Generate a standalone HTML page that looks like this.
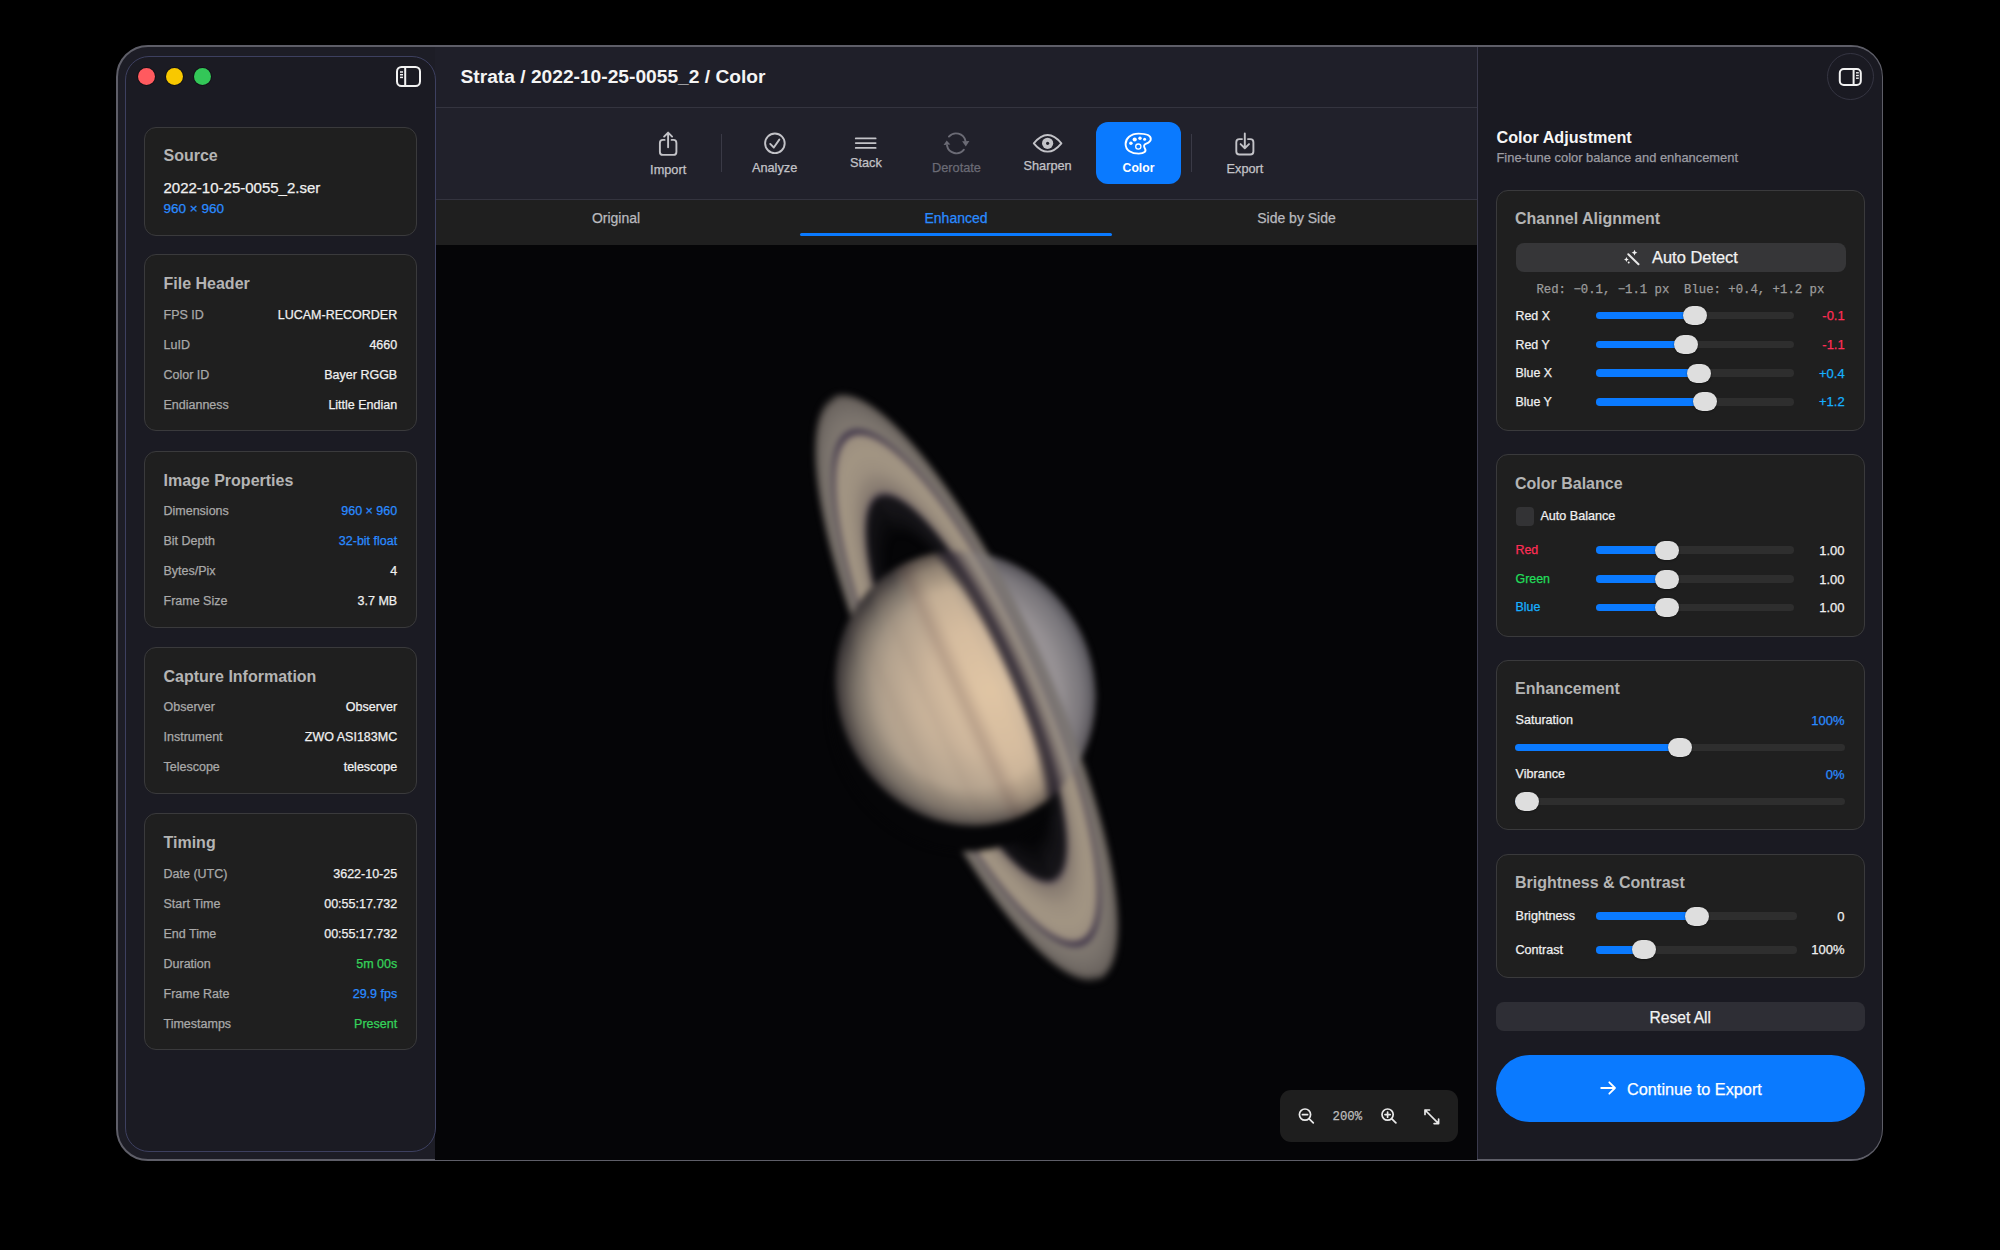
<!DOCTYPE html><html><head><meta charset="utf-8"><style>
*{box-sizing:border-box;margin:0;padding:0}
html,body{width:2000px;height:1250px;background:#000;overflow:hidden;font-family:"Liberation Sans",sans-serif;color:#eee}
.abs{position:absolute}
.t{position:absolute;white-space:nowrap;line-height:1;-webkit-text-stroke:0.25px currentColor}
</style></head><body><div class="abs" style="left:116px;top:45px;width:1767px;height:1116px;border-radius:32px;background:#1d1d26;border:2px solid #5e5e68;"></div>
<div class="abs" style="left:435px;top:46.5px;width:1042px;height:60.5px;background:#1f1f29;"></div>
<div class="abs" style="left:435px;top:107px;width:1042px;height:92px;background:#21212b;border-top:1px solid #34343f;"></div>
<div class="abs" style="left:435px;top:199px;width:1042px;height:46px;background:#1f1f1f;border-top:1px solid #34343f;"></div>
<div class="abs" style="left:435px;top:245px;width:1042px;height:914.5px;background:#050507;"></div>
<div class="abs" style="left:1477px;top:47px;width:404.5px;height:1112px;background:#1a1a22;border-left:1px solid #3a3a4c;border-radius:0 30px 30px 0;"></div>
<div class="abs" style="left:125px;top:55.5px;width:310.5px;height:1096px;border-radius:24px;background:#1b1b23;border:1px solid #3d4060;"></div>
<div class="abs" style="left:138.0px;top:68.0px;width:17px;height:17px;border-radius:50%;background:#ff5a5f;box-shadow:0 0 0 1px rgba(0,0,0,.35);"></div>
<div class="abs" style="left:165.7px;top:68.0px;width:17px;height:17px;border-radius:50%;background:#f8c800;box-shadow:0 0 0 1px rgba(0,0,0,.35);"></div>
<div class="abs" style="left:193.5px;top:68.0px;width:17px;height:17px;border-radius:50%;background:#33c758;box-shadow:0 0 0 1px rgba(0,0,0,.35);"></div>
<svg class="abs" style="left:395px;top:65px" width="28" height="24" viewBox="0 0 28 24"><rect x="2" y="2" width="23" height="19" rx="4.5" fill="none" stroke="#f2f2f2" stroke-width="2"/><line x1="10.2" y1="2" x2="10.2" y2="21" stroke="#f2f2f2" stroke-width="2"/><g stroke="#f2f2f2" stroke-width="1.5"><line x1="5" y1="7" x2="8" y2="7"/><line x1="5" y1="9.7" x2="8" y2="9.7"/><line x1="5" y1="12.4" x2="8" y2="12.4"/></g></svg>
<div class="abs" style="left:144.4px;top:126.6px;width:272.8px;height:109px;background:#1f1f1f;border:1px solid #3a3a3c;border-radius:12px;"></div>
<div class="t" style="top:148.26px;font-size:16px;color:#b4b4b4;font-weight:bold;-webkit-text-stroke:0;left:163.50px;">Source</div>
<div class="t" style="top:180.30px;font-size:15px;color:#f0f0f0;left:163.50px;">2022-10-25-0055_2.ser</div>
<div class="t" style="top:201.57px;font-size:13.5px;color:#2a8bff;left:163.50px;">960 × 960</div>
<div class="abs" style="left:144.4px;top:254.4px;width:272.8px;height:177.1px;background:#1f1f1f;border:1px solid #3a3a3c;border-radius:12px;"></div>
<div class="t" style="top:276.06px;font-size:16px;color:#b4b4b4;font-weight:bold;-webkit-text-stroke:0;left:163.50px;">File Header</div>
<div class="t" style="top:308.62px;font-size:12.5px;color:#a9a9a9;left:163.50px;">FPS ID</div>
<div class="t" style="top:308.62px;font-size:12.5px;color:#f0f0f0;right:1602.80px;">LUCAM-RECORDER</div>
<div class="t" style="top:338.62px;font-size:12.5px;color:#a9a9a9;left:163.50px;">LuID</div>
<div class="t" style="top:338.62px;font-size:12.5px;color:#f0f0f0;right:1602.80px;">4660</div>
<div class="t" style="top:368.62px;font-size:12.5px;color:#a9a9a9;left:163.50px;">Color ID</div>
<div class="t" style="top:368.62px;font-size:12.5px;color:#f0f0f0;right:1602.80px;">Bayer RGGB</div>
<div class="t" style="top:398.62px;font-size:12.5px;color:#a9a9a9;left:163.50px;">Endianness</div>
<div class="t" style="top:398.62px;font-size:12.5px;color:#f0f0f0;right:1602.80px;">Little Endian</div>
<div class="abs" style="left:144.4px;top:450.9px;width:272.8px;height:177.10000000000002px;background:#1f1f1f;border:1px solid #3a3a3c;border-radius:12px;"></div>
<div class="t" style="top:472.86px;font-size:16px;color:#b4b4b4;font-weight:bold;-webkit-text-stroke:0;left:163.50px;">Image Properties</div>
<div class="t" style="top:505.42px;font-size:12.5px;color:#a9a9a9;left:163.50px;">Dimensions</div>
<div class="t" style="top:505.42px;font-size:12.5px;color:#2a8bff;right:1602.80px;">960 × 960</div>
<div class="t" style="top:535.42px;font-size:12.5px;color:#a9a9a9;left:163.50px;">Bit Depth</div>
<div class="t" style="top:535.42px;font-size:12.5px;color:#2a8bff;right:1602.80px;">32-bit float</div>
<div class="t" style="top:565.42px;font-size:12.5px;color:#a9a9a9;left:163.50px;">Bytes/Pix</div>
<div class="t" style="top:565.42px;font-size:12.5px;color:#f0f0f0;right:1602.80px;">4</div>
<div class="t" style="top:595.42px;font-size:12.5px;color:#a9a9a9;left:163.50px;">Frame Size</div>
<div class="t" style="top:595.42px;font-size:12.5px;color:#f0f0f0;right:1602.80px;">3.7 MB</div>
<div class="abs" style="left:144.4px;top:647.2px;width:272.8px;height:147.19999999999993px;background:#1f1f1f;border:1px solid #3a3a3c;border-radius:12px;"></div>
<div class="t" style="top:668.86px;font-size:16px;color:#b4b4b4;font-weight:bold;-webkit-text-stroke:0;left:163.50px;">Capture Information</div>
<div class="t" style="top:701.42px;font-size:12.5px;color:#a9a9a9;left:163.50px;">Observer</div>
<div class="t" style="top:701.42px;font-size:12.5px;color:#f0f0f0;right:1602.80px;">Observer</div>
<div class="t" style="top:731.42px;font-size:12.5px;color:#a9a9a9;left:163.50px;">Instrument</div>
<div class="t" style="top:731.42px;font-size:12.5px;color:#f0f0f0;right:1602.80px;">ZWO ASI183MC</div>
<div class="t" style="top:761.42px;font-size:12.5px;color:#a9a9a9;left:163.50px;">Telescope</div>
<div class="t" style="top:761.42px;font-size:12.5px;color:#f0f0f0;right:1602.80px;">telescope</div>
<div class="abs" style="left:144.4px;top:813.3px;width:272.8px;height:236.70000000000005px;background:#1f1f1f;border:1px solid #3a3a3c;border-radius:12px;"></div>
<div class="t" style="top:835.26px;font-size:16px;color:#b4b4b4;font-weight:bold;-webkit-text-stroke:0;left:163.50px;">Timing</div>
<div class="t" style="top:867.82px;font-size:12.5px;color:#a9a9a9;left:163.50px;">Date (UTC)</div>
<div class="t" style="top:867.82px;font-size:12.5px;color:#f0f0f0;right:1602.80px;">3622-10-25</div>
<div class="t" style="top:897.82px;font-size:12.5px;color:#a9a9a9;left:163.50px;">Start Time</div>
<div class="t" style="top:897.82px;font-size:12.5px;color:#f0f0f0;right:1602.80px;">00:55:17.732</div>
<div class="t" style="top:927.82px;font-size:12.5px;color:#a9a9a9;left:163.50px;">End Time</div>
<div class="t" style="top:927.82px;font-size:12.5px;color:#f0f0f0;right:1602.80px;">00:55:17.732</div>
<div class="t" style="top:957.82px;font-size:12.5px;color:#a9a9a9;left:163.50px;">Duration</div>
<div class="t" style="top:957.82px;font-size:12.5px;color:#35d35a;right:1602.80px;">5m 00s</div>
<div class="t" style="top:987.82px;font-size:12.5px;color:#a9a9a9;left:163.50px;">Frame Rate</div>
<div class="t" style="top:987.82px;font-size:12.5px;color:#2a8bff;right:1602.80px;">29.9 fps</div>
<div class="t" style="top:1017.82px;font-size:12.5px;color:#a9a9a9;left:163.50px;">Timestamps</div>
<div class="t" style="top:1017.82px;font-size:12.5px;color:#35d35a;right:1602.80px;">Present</div>
<div class="t" style="top:66.65px;font-size:19.2px;color:#f4f4f4;font-weight:bold;-webkit-text-stroke:0;left:460.50px;">Strata / 2022-10-25-0055_2 / Color</div>

<svg class="abs" style="left:435px;top:245px" width="1042" height="914" viewBox="435 245 1042 914">
<defs>
<filter id="bl" x="-20%" y="-20%" width="140%" height="140%" color-interpolation-filters="sRGB"><feGaussianBlur stdDeviation="3"/></filter>
<radialGradient id="rg" gradientUnits="userSpaceOnUse" cx="0" cy="0" r="322">
 <stop offset="0" stop-color="#000" stop-opacity="0"/>
 <stop offset="0.52" stop-color="#17161a" stop-opacity="0"/>
 <stop offset="0.60" stop-color="#17161a" stop-opacity="0.6"/>
 <stop offset="0.650" stop-color="#1a181c" stop-opacity="0.75"/>
 <stop offset="0.655" stop-color="#4e4450" stop-opacity="1"/>
 <stop offset="0.672" stop-color="#85796f"/>
 <stop offset="0.74" stop-color="#9c8f7f"/>
 <stop offset="0.80" stop-color="#a29583"/>
 <stop offset="0.855" stop-color="#9a8d7e"/>
 <stop offset="0.862" stop-color="#40364a"/>
 <stop offset="0.874" stop-color="#40364a"/>
 <stop offset="0.882" stop-color="#807870"/>
 <stop offset="0.93" stop-color="#77706a"/>
 <stop offset="0.975" stop-color="#6a635e"/>
 <stop offset="1" stop-color="#6a635e" stop-opacity="0"/>
</radialGradient>
<radialGradient id="sh" gradientUnits="userSpaceOnUse" cx="0" cy="0" r="260">
 <stop offset="0" stop-color="#000" stop-opacity="0"/>
 <stop offset="0.64" stop-color="#2a2230" stop-opacity="0"/>
 <stop offset="0.70" stop-color="#2a2230" stop-opacity="0.5"/>
 <stop offset="0.80" stop-color="#2e2634" stop-opacity="0.62"/>
 <stop offset="0.87" stop-color="#3a3240" stop-opacity="0.45"/>
 <stop offset="0.95" stop-color="#3a3240" stop-opacity="0.12"/>
 <stop offset="1" stop-color="#3a3240" stop-opacity="0"/>
</radialGradient>
<radialGradient id="gy" gradientUnits="userSpaceOnUse" cx="0" cy="0" r="324">
 <stop offset="0" stop-color="#888" stop-opacity="0"/>
 <stop offset="0.70" stop-color="#878486" stop-opacity="0"/>
 <stop offset="0.76" stop-color="#878486" stop-opacity="0.35"/>
 <stop offset="1" stop-color="#878486" stop-opacity="0.35"/>
</radialGradient>
<radialGradient id="pg" gradientUnits="userSpaceOnUse" cx="12" cy="-22" r="152">
 <stop offset="0" stop-color="#dcc3a4"/>
 <stop offset="0.42" stop-color="#cdb69c"/>
 <stop offset="0.70" stop-color="#b3a28e"/>
 <stop offset="0.88" stop-color="#8e8478"/>
 <stop offset="1" stop-color="#5a5450"/>
</radialGradient>
<linearGradient id="bands" gradientUnits="userSpaceOnUse" x1="0" y1="-130" x2="0" y2="130">
 <stop offset="0" stop-color="#8a8a92" stop-opacity="0.9"/>
 <stop offset="0.30" stop-color="#8e8a92" stop-opacity="0.8"/>
 <stop offset="0.36" stop-color="#d8bc9c" stop-opacity="0"/>
 <stop offset="0.40" stop-color="#e6c8a4" stop-opacity="0.35"/>
 <stop offset="0.47" stop-color="#e6c8a4" stop-opacity="0.35"/>
 <stop offset="0.53" stop-color="#9a8070" stop-opacity="0.45"/>
 <stop offset="0.58" stop-color="#b8a08a" stop-opacity="0.0"/>
 <stop offset="0.66" stop-color="#9c8a7a" stop-opacity="0.2"/>
 <stop offset="0.70" stop-color="#c0ae98" stop-opacity="0.0"/>
 <stop offset="0.78" stop-color="#9c8a7a" stop-opacity="0.2"/>
 <stop offset="0.84" stop-color="#c0ae98" stop-opacity="0.0"/>
 <stop offset="1" stop-color="#8a7c70" stop-opacity="0.25"/>
</linearGradient>
<radialGradient id="limb" cx="0.5" cy="0.5" r="0.5">
 <stop offset="0" stop-color="#000" stop-opacity="0"/>
 <stop offset="0.72" stop-color="#000" stop-opacity="0"/>
 <stop offset="0.9" stop-color="#0a0810" stop-opacity="0.18"/>
 <stop offset="1" stop-color="#0a0810" stop-opacity="0.45"/>
</radialGradient>
<clipPath id="front"><rect x="-400" y="-400" width="800" height="400"/></clipPath>
<clipPath id="pc"><ellipse cx="0" cy="1" rx="139" ry="128"/></clipPath>
</defs>
<g filter="url(#bl)">
 <g transform="translate(966.3 688) rotate(65.5)">
  <g transform="scale(1 0.254)"><circle r="322" fill="url(#rg)"/></g>
  <ellipse cx="21" cy="17" rx="139" ry="128" fill="#050507"/>
  <ellipse cx="0" cy="1" rx="139" ry="128" fill="url(#pg)"/>
  <ellipse cx="0" cy="1" rx="139" ry="128" fill="url(#bands)"/>
  <ellipse cx="0" cy="1" rx="139" ry="128" fill="url(#limb)"/>
  <g clip-path="url(#front)"><g transform="scale(1 0.254)"><circle r="322" fill="url(#rg)"/></g>
   <g clip-path="url(#pc)"><g transform="scale(1 0.254)"><circle r="324" fill="url(#gy)"/><circle r="260" fill="url(#sh)"/></g></g>
  </g>
 </g>
</g>
</svg>

<div class="abs" style="left:1095.6px;top:122px;width:85.8px;height:62px;background:#0a7aff;border-radius:12px;"></div>
<div class="abs" style="left:720.9px;top:134px;width:1px;height:38px;background:#3a3a46;"></div>
<div class="abs" style="left:1191.1px;top:134px;width:1px;height:38px;background:#3a3a46;"></div>
<svg class="abs" style="left:0;top:0" width="2000" height="250" viewBox="0 0 2000 250"><g fill="none" stroke="#c3c3c8" stroke-width="1.9" stroke-linecap="round" stroke-linejoin="round"><path d="M664.6 139.9 H662.9 Q659.9 139.9 659.9 142.9 V151.9 Q659.9 154.9 662.9 154.9 H673.4 Q676.4 154.9 676.4 151.9 V142.9 Q676.4 139.9 673.4 139.9 H671.6"/><path d="M668.1 147.3 V132.6 M664.1 136.6 L668.1 132.6 L672.1 136.6"/><circle cx="774.9" cy="143.3" r="9.8"/><path d="M770.2 143.9 L773.8 147.5 L779.3 139.6"/><path d="M855.8 138.4 H875.6 M855.8 143.1 H875.6 M855.8 147.9 H875.6"/><path d="M1242 139.1 H1239.4 Q1236.3 139.1 1236.3 142.2 V151.4 Q1236.3 154.5 1239.4 154.5 H1250.3 Q1253.4 154.5 1253.4 151.4 V142.2 Q1253.4 139.1 1250.3 139.1 H1248"/><path d="M1244.8 133.5 V148 M1240.6 144.1 L1244.8 148.2 L1249 144.1"/><path d="M1033.8 143.3 Q1047.6 126.6 1061.4 143.3 Q1047.6 160 1033.8 143.3 Z"/></g><circle cx="1047.6" cy="143.3" r="5.6" fill="#c3c3c8"/><circle cx="1047.6" cy="143.3" r="1.6" fill="#21212b"/><g fill="none" stroke="#6b6b75" stroke-width="1.9" stroke-linecap="round"><path d="M948.9 136.6 A9.6 9.6 0 0 1 965.4 140.8"/><path d="M963.9 149.7 A9.6 9.6 0 0 1 947 145.5"/></g><path d="M962.1 141.3 L969.4 141 L965.8 146.4 Z" fill="#6b6b75"/><path d="M943.6 144.9 L950.3 144.5 L946.7 140.4 Z" fill="#6b6b75"/><path d="M1138.5 133.6 C1130.5 133.6 1125.6 138.6 1125.6 144 C1125.6 150.5 1131.5 153.6 1138.8 153.6 C1144.5 153.6 1146.6 151.2 1144.9 148.4 C1143.5 146.2 1143.8 144.6 1146.3 143.6 C1149.6 142.3 1150.8 140.8 1150.8 139 C1150.8 135.8 1146.5 133.6 1138.5 133.6 Z" fill="none" stroke="#fff" stroke-width="1.9"/><circle cx="1130.9" cy="143.3" r="1.75" fill="#fff"/><circle cx="1134.7" cy="139.5" r="2.1" fill="#fff"/><circle cx="1140" cy="138.2" r="1.7" fill="#fff"/><circle cx="1144.6" cy="139.3" r="1.5" fill="#fff"/><circle cx="1138.3" cy="146.6" r="2.6" fill="none" stroke="#fff" stroke-width="1.3"/></svg>
<div class="t" style="top:163.91px;font-size:12.75px;color:#c3c3c8;left:268.20px;width:800px;text-align:center;">Import</div>
<div class="t" style="top:162.21px;font-size:12.75px;color:#c3c3c8;left:374.60px;width:800px;text-align:center;">Analyze</div>
<div class="t" style="top:156.91px;font-size:12.75px;color:#c3c3c8;left:465.90px;width:800px;text-align:center;">Stack</div>
<div class="t" style="top:162.01px;font-size:12.75px;color:#6b6b75;left:556.50px;width:800px;text-align:center;">Derotate</div>
<div class="t" style="top:160.21px;font-size:12.75px;color:#c3c3c8;left:647.60px;width:800px;text-align:center;">Sharpen</div>
<div class="t" style="top:162.47px;font-size:12.2px;color:#ffffff;font-weight:bold;-webkit-text-stroke:0;left:738.50px;width:800px;text-align:center;">Color</div>
<div class="t" style="top:163.11px;font-size:12.75px;color:#c3c3c8;left:845.00px;width:800px;text-align:center;">Export</div>
<div class="t" style="top:210.65px;font-size:14px;color:#b9b9be;left:216.00px;width:800px;text-align:center;">Original</div>
<div class="t" style="top:210.65px;font-size:14px;color:#2a8bff;left:556.00px;width:800px;text-align:center;">Enhanced</div>
<div class="t" style="top:210.65px;font-size:14px;color:#b9b9be;left:896.50px;width:800px;text-align:center;">Side by Side</div>
<div class="abs" style="left:800.3px;top:232.8px;width:312.2px;height:3px;background:#0a7aff;border-radius:1.5px;"></div>
<div class="abs" style="left:1827px;top:53px;width:47px;height:47px;border-radius:50%;border:1px solid #353542;background:#1a1a22;"></div>
<svg class="abs" style="left:1830px;top:60px" width="40" height="34" viewBox="1830 60 40 34"><rect x="1839.8" y="69" width="21" height="16" rx="4" fill="none" stroke="#f2f2f2" stroke-width="2"/><line x1="1853.6" y1="69" x2="1853.6" y2="85" stroke="#f2f2f2" stroke-width="2"/><g stroke="#f2f2f2" stroke-width="1.4"><line x1="1856" y1="72.8" x2="1858.8" y2="72.8"/><line x1="1856" y1="75.5" x2="1858.8" y2="75.5"/><line x1="1856" y1="78.2" x2="1858.8" y2="78.2"/></g></svg>
<div class="t" style="top:129.04px;font-size:16.2px;color:#f6f6f6;font-weight:bold;-webkit-text-stroke:0;left:1496.50px;">Color Adjustment</div>
<div class="t" style="top:151.73px;font-size:12.9px;color:#9d9da3;left:1496.50px;">Fine-tune color balance and enhancement</div>
<div class="abs" style="left:1496px;top:190px;width:369px;height:241px;background:#1f1f1f;border:1px solid #3a3a3c;border-radius:12px;"></div>
<div class="t" style="top:211.26px;font-size:16px;color:#b4b4b4;font-weight:bold;-webkit-text-stroke:0;left:1515.00px;">Channel Alignment</div>
<div class="abs" style="left:1515.5px;top:243px;width:330px;height:29px;background:#363638;border-radius:8px;"></div>
<svg class="abs" style="left:1620px;top:248px" width="24" height="22" viewBox="1620 248 24 22"><line x1="1628.3" y1="254.3" x2="1638.5" y2="264.3" stroke="#e8e8e8" stroke-width="2" stroke-linecap="round"/><path d="M1634.5 249.8 L1635.4 251.8 L1637.4 252.7 L1635.4 253.6 L1634.5 255.6 L1633.6 253.6 L1631.6 252.7 L1633.6 251.8 Z" fill="#f0f0f0"/><path d="M1626.4 257.1 L1627.2 258.7 L1628.8 259.5 L1627.2 260.3 L1626.4 261.9 L1625.6 260.3 L1624 259.5 L1625.6 258.7 Z" fill="#f0f0f0"/><circle cx="1628.7" cy="262.5" r="1" fill="#f0f0f0"/></svg>
<div class="t" style="top:249.38px;font-size:16.45px;color:#f2f2f2;left:1652.00px;">Auto Detect</div>
<div class="t" style="top:283.57px;font-size:12.3px;color:#9c9c9c;font-family:'Liberation Mono',monospace;left:1280.40px;width:800px;text-align:center;">Red: −0.1, −1.1 px&nbsp; Blue: +0.4, +1.2 px</div>
<div class="t" style="top:309.60px;font-size:12.4px;color:#f0f0f0;left:1515.50px;">Red X</div>
<div class="abs" style="left:1596px;top:311.95px;width:198px;height:7.5px;background:#2e2e2e;border-radius:3.75px;"></div>
<div class="abs" style="left:1596px;top:311.95px;width:98.70000000000005px;height:7.5px;background:#0a7aff;border-radius:3.75px 0 0 3.75px;"></div>
<div class="abs" style="left:1682.7px;top:306.2px;width:24px;height:19px;background:#dedede;border-radius:9.5px;box-shadow:0 0.5px 2px rgba(0,0,0,.5);"></div>
<div class="t" style="top:309.20px;font-size:13px;color:#ff2d55;right:155.30px;">-0.1</div>
<div class="t" style="top:338.50px;font-size:12.4px;color:#f0f0f0;left:1515.50px;">Red Y</div>
<div class="abs" style="left:1596px;top:340.85px;width:198px;height:7.5px;background:#2e2e2e;border-radius:3.75px;"></div>
<div class="abs" style="left:1596px;top:340.85px;width:90px;height:7.5px;background:#0a7aff;border-radius:3.75px 0 0 3.75px;"></div>
<div class="abs" style="left:1674px;top:335.1px;width:24px;height:19px;background:#dedede;border-radius:9.5px;box-shadow:0 0.5px 2px rgba(0,0,0,.5);"></div>
<div class="t" style="top:338.10px;font-size:13px;color:#ff2d55;right:155.30px;">-1.1</div>
<div class="t" style="top:367.10px;font-size:12.4px;color:#f0f0f0;left:1515.50px;">Blue X</div>
<div class="abs" style="left:1596px;top:369.45px;width:198px;height:7.5px;background:#2e2e2e;border-radius:3.75px;"></div>
<div class="abs" style="left:1596px;top:369.45px;width:102.79999999999995px;height:7.5px;background:#0a7aff;border-radius:3.75px 0 0 3.75px;"></div>
<div class="abs" style="left:1686.8px;top:363.7px;width:24px;height:19px;background:#dedede;border-radius:9.5px;box-shadow:0 0.5px 2px rgba(0,0,0,.5);"></div>
<div class="t" style="top:366.70px;font-size:13px;color:#16b0ff;right:155.30px;">+0.4</div>
<div class="t" style="top:395.70px;font-size:12.4px;color:#f0f0f0;left:1515.50px;">Blue Y</div>
<div class="abs" style="left:1596px;top:398.05px;width:198px;height:7.5px;background:#2e2e2e;border-radius:3.75px;"></div>
<div class="abs" style="left:1596px;top:398.05px;width:109.29999999999995px;height:7.5px;background:#0a7aff;border-radius:3.75px 0 0 3.75px;"></div>
<div class="abs" style="left:1693.3px;top:392.3px;width:24px;height:19px;background:#dedede;border-radius:9.5px;box-shadow:0 0.5px 2px rgba(0,0,0,.5);"></div>
<div class="t" style="top:395.30px;font-size:13px;color:#16b0ff;right:155.30px;">+1.2</div>
<div class="abs" style="left:1496px;top:454px;width:369px;height:182.5px;background:#1f1f1f;border:1px solid #3a3a3c;border-radius:12px;"></div>
<div class="t" style="top:476.06px;font-size:16px;color:#b4b4b4;font-weight:bold;-webkit-text-stroke:0;left:1515.00px;">Color Balance</div>
<div class="abs" style="left:1515.6px;top:507.3px;width:18.4px;height:18.4px;background:#333335;border-radius:4px;"></div>
<div class="t" style="top:510.33px;font-size:12.6px;color:#f0f0f0;left:1540.40px;">Auto Balance</div>
<div class="t" style="top:543.90px;font-size:12.4px;color:#ff2d55;left:1515.50px;">Red</div>
<div class="abs" style="left:1596.4px;top:546.25px;width:197.5999999999999px;height:7.5px;background:#2e2e2e;border-radius:3.75px;"></div>
<div class="abs" style="left:1596.4px;top:546.25px;width:70.29999999999995px;height:7.5px;background:#0a7aff;border-radius:3.75px 0 0 3.75px;"></div>
<div class="abs" style="left:1654.7px;top:540.5px;width:24px;height:19px;background:#dedede;border-radius:9.5px;box-shadow:0 0.5px 2px rgba(0,0,0,.5);"></div>
<div class="t" style="top:543.50px;font-size:13px;color:#f0f0f0;right:155.50px;">1.00</div>
<div class="t" style="top:572.90px;font-size:12.4px;color:#22dd5a;left:1515.50px;">Green</div>
<div class="abs" style="left:1596.4px;top:575.25px;width:197.5999999999999px;height:7.5px;background:#2e2e2e;border-radius:3.75px;"></div>
<div class="abs" style="left:1596.4px;top:575.25px;width:70.29999999999995px;height:7.5px;background:#0a7aff;border-radius:3.75px 0 0 3.75px;"></div>
<div class="abs" style="left:1654.7px;top:569.5px;width:24px;height:19px;background:#dedede;border-radius:9.5px;box-shadow:0 0.5px 2px rgba(0,0,0,.5);"></div>
<div class="t" style="top:572.50px;font-size:13px;color:#f0f0f0;right:155.50px;">1.00</div>
<div class="t" style="top:601.40px;font-size:12.4px;color:#16b0ff;left:1515.50px;">Blue</div>
<div class="abs" style="left:1596.4px;top:603.75px;width:197.5999999999999px;height:7.5px;background:#2e2e2e;border-radius:3.75px;"></div>
<div class="abs" style="left:1596.4px;top:603.75px;width:70.29999999999995px;height:7.5px;background:#0a7aff;border-radius:3.75px 0 0 3.75px;"></div>
<div class="abs" style="left:1654.7px;top:598.0px;width:24px;height:19px;background:#dedede;border-radius:9.5px;box-shadow:0 0.5px 2px rgba(0,0,0,.5);"></div>
<div class="t" style="top:601.00px;font-size:13px;color:#f0f0f0;right:155.50px;">1.00</div>
<div class="abs" style="left:1496px;top:660px;width:369px;height:170px;background:#1f1f1f;border:1px solid #3a3a3c;border-radius:12px;"></div>
<div class="t" style="top:681.46px;font-size:16px;color:#b4b4b4;font-weight:bold;-webkit-text-stroke:0;left:1515.00px;">Enhancement</div>
<div class="t" style="top:714.33px;font-size:12.6px;color:#f0f0f0;left:1515.50px;">Saturation</div>
<div class="t" style="top:714.00px;font-size:13px;color:#2a8bff;right:155.50px;">100%</div>
<div class="abs" style="left:1515px;top:743.75px;width:330.29999999999995px;height:7.5px;background:#2e2e2e;border-radius:3.75px;"></div>
<div class="abs" style="left:1515px;top:743.75px;width:165px;height:7.5px;background:#0a7aff;border-radius:3.75px 0 0 3.75px;"></div>
<div class="abs" style="left:1668px;top:738.0px;width:24px;height:19px;background:#dedede;border-radius:9.5px;box-shadow:0 0.5px 2px rgba(0,0,0,.5);"></div>
<div class="t" style="top:768.13px;font-size:12.6px;color:#f0f0f0;left:1515.50px;">Vibrance</div>
<div class="t" style="top:767.80px;font-size:13px;color:#2a8bff;right:155.50px;">0%</div>
<div class="abs" style="left:1515px;top:797.65px;width:330.29999999999995px;height:7.5px;background:#2e2e2e;border-radius:3.75px;"></div>
<div class="abs" style="left:1515px;top:797.65px;width:12px;height:7.5px;background:#0a7aff;border-radius:3.75px 0 0 3.75px;"></div>
<div class="abs" style="left:1515px;top:791.9px;width:24px;height:19px;background:#dedede;border-radius:9.5px;box-shadow:0 0.5px 2px rgba(0,0,0,.5);"></div>
<div class="abs" style="left:1496px;top:853.8px;width:369px;height:124.60000000000002px;background:#1f1f1f;border:1px solid #3a3a3c;border-radius:12px;"></div>
<div class="t" style="top:875.46px;font-size:16px;color:#b4b4b4;font-weight:bold;-webkit-text-stroke:0;left:1515.00px;">Brightness &amp; Contrast</div>
<div class="t" style="top:909.93px;font-size:12.6px;color:#f0f0f0;left:1515.50px;">Brightness</div>
<div class="abs" style="left:1596.3px;top:912.45px;width:201.10000000000014px;height:7.5px;background:#2e2e2e;border-radius:3.75px;"></div>
<div class="abs" style="left:1596.3px;top:912.45px;width:100.70000000000005px;height:7.5px;background:#0a7aff;border-radius:3.75px 0 0 3.75px;"></div>
<div class="abs" style="left:1685px;top:906.7px;width:24px;height:19px;background:#dedede;border-radius:9.5px;box-shadow:0 0.5px 2px rgba(0,0,0,.5);"></div>
<div class="t" style="top:909.70px;font-size:13px;color:#f0f0f0;right:155.50px;">0</div>
<div class="t" style="top:943.63px;font-size:12.6px;color:#f0f0f0;left:1515.50px;">Contrast</div>
<div class="abs" style="left:1596.3px;top:946.15px;width:201.10000000000014px;height:7.5px;background:#2e2e2e;border-radius:3.75px;"></div>
<div class="abs" style="left:1596.3px;top:946.15px;width:47.299999999999955px;height:7.5px;background:#0a7aff;border-radius:3.75px 0 0 3.75px;"></div>
<div class="abs" style="left:1631.6px;top:940.4px;width:24px;height:19px;background:#dedede;border-radius:9.5px;box-shadow:0 0.5px 2px rgba(0,0,0,.5);"></div>
<div class="t" style="top:943.40px;font-size:13px;color:#f0f0f0;right:155.50px;">100%</div>
<div class="abs" style="left:1496px;top:1002.3px;width:368.7px;height:29px;background:#2e2e35;border-radius:8px;"></div>
<div class="t" style="top:1009.79px;font-size:15.6px;color:#f2f2f2;left:1280.30px;width:800px;text-align:center;">Reset All</div>
<div class="abs" style="left:1496px;top:1055px;width:368.7px;height:66.8px;background:#0a7aff;border-radius:34px;"></div>
<div class="t" style="top:1081.20px;font-size:16.3px;color:#ffffff;left:1627.00px;">Continue to Export</div>
<svg class="abs" style="left:1596px;top:1078px" width="24" height="20" viewBox="1596 1078 24 20"><path d="M1601.2 1088 H1615 M1609.3 1082.3 L1615 1088 L1609.3 1093.7" fill="none" stroke="#fff" stroke-width="1.8" stroke-linecap="round" stroke-linejoin="round"/></svg>
<div class="abs" style="left:1280px;top:1089.8px;width:177.5px;height:52.2px;background:#1e1e1e;border-radius:11px;"></div>
<svg class="abs" style="left:1290px;top:1100px" width="160" height="34" viewBox="1290 1100 160 34"><g fill="none" stroke="#eaeaea" stroke-width="1.7" stroke-linecap="round"><circle cx="1305" cy="1114.6" r="5.6"/><line x1="1309.2" y1="1118.8" x2="1313.3" y2="1122.9"/><line x1="1302.4" y1="1114.6" x2="1307.6" y2="1114.6"/><circle cx="1387.6" cy="1114.6" r="5.6"/><line x1="1391.8" y1="1118.8" x2="1395.9" y2="1122.9"/><line x1="1385" y1="1114.6" x2="1390.2" y2="1114.6"/><line x1="1387.6" y1="1112" x2="1387.6" y2="1117.2"/><path d="M1425 1110 L1438.6 1123.6 M1425 1110 V1114.5 M1425 1110 H1429.5 M1438.6 1123.6 V1119.1 M1438.6 1123.6 H1434.1"/></g></svg>
<div class="t" style="top:1111.07px;font-size:12.3px;color:#bdbdbd;font-family:'Liberation Mono',monospace;left:947.30px;width:800px;text-align:center;">200%</div></body></html>
